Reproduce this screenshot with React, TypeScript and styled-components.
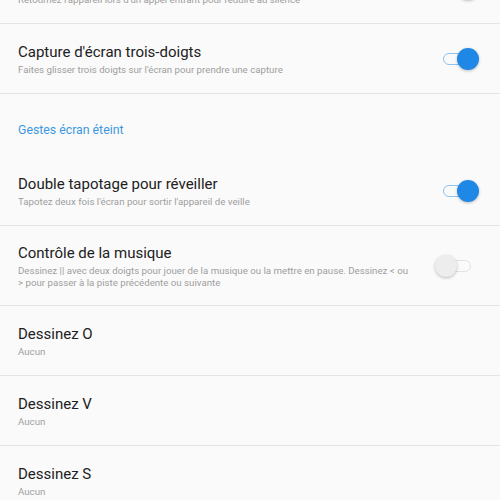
import React from "react";
import styled, { createGlobalStyle } from "styled-components";

const Global = createGlobalStyle`
  html, body {
    margin: 0;
    padding: 0;
    background: #fafafa;
    overflow: hidden;
  }
  body {
    font-family: Roboto, "Noto Sans", "Liberation Sans", sans-serif;
    -webkit-font-smoothing: antialiased;
  }
`;

const Screen = styled.div`
  width: 500px;
  height: 500px;
  overflow: hidden;
  background: #fafafa;
`;

const List = styled.div`
  display: flex;
  flex-direction: column;
  margin-top: -46px;
`;

const Row = styled.div`
  display: flex;
  align-items: center;
  gap: 20px;
  min-height: 70px;
  box-sizing: border-box;
  padding: 17px 21px 16px 18px;
  border-bottom: 1px solid #e4e4e4;
`;

const Texts = styled.div`
  flex: 1;
  display: flex;
  flex-direction: column;
  gap: 2px;
  min-width: 0;
`;

const Title = styled.div`
  font-size: 15px;
  line-height: 20px;
  color: #212121;
`;

const Summary = styled.div`
  font-size: 9.7px;
  line-height: 12px;
  color: #9e9e9e;
`;

const SectionHeader = styled.div`
  padding: 29px 18px 19px;
  font-size: 12.3px;
  line-height: 14px;
  color: #3b98e0;
`;

const Switch = styled.div`
  position: relative;
  flex: none;
  width: 44px;
  height: 22px;
`;

const Track = styled.div<{ $on: boolean }>`
  position: absolute;
  left: 8px;
  right: 8px;
  top: 5px;
  height: 12px;
  box-sizing: border-box;
  border-radius: 6px;
  border: 1.5px solid ${(p) => (p.$on ? "#8fc3ef" : "#e2e2e2")};
  background: #fafafa;
`;

const Thumb = styled.div<{ $on: boolean }>`
  position: absolute;
  top: 0;
  ${(p) => (p.$on ? "right: 0;" : "left: 0;")}
  width: 22px;
  height: 22px;
  border-radius: 50%;
  background: ${(p) => (p.$on ? "#1f88e6" : "#ededed")};
  box-shadow: 0 1px 3px rgba(0, 0, 0, 0.25);
`;

const Toggle = ({ on }: { on: boolean }) => (
  <Switch>
    <Track $on={on} />
    <Thumb $on={on} />
  </Switch>
);

type Item = { title: string; summary: string; toggle?: boolean };

const SettingRow = ({ title, summary, toggle }: Item) => (
  <Row>
    <Texts>
      <Title>{title}</Title>
      <Summary>{summary}</Summary>
    </Texts>
    {toggle !== undefined && <Toggle on={toggle} />}
  </Row>
);

export default function App() {
  return (
    <Screen>
      <Global />
      <List>
        <SettingRow
          title="Retourner pour couper le son"
          summary="Retournez l'appareil lors d'un appel entrant pour réduire au silence"
          toggle={true}
        />
        <SettingRow
          title="Capture d'écran trois-doigts"
          summary="Faites glisser trois doigts sur l'écran pour prendre une capture"
          toggle={true}
        />
        <SectionHeader>Gestes écran éteint</SectionHeader>
        <SettingRow
          title="Double tapotage pour réveiller"
          summary="Tapotez deux fois l'écran pour sortir l'appareil de veille"
          toggle={true}
        />
        <SettingRow
          title="Contrôle de la musique"
          summary="Dessinez || avec deux doigts pour jouer de la musique ou la mettre en pause. Dessinez < ou > pour passer à la piste précédente ou suivante"
          toggle={false}
        />
        <SettingRow title="Dessinez O" summary="Aucun" />
        <SettingRow title="Dessinez V" summary="Aucun" />
        <SettingRow title="Dessinez S" summary="Aucun" />
      </List>
    </Screen>
  );
}
